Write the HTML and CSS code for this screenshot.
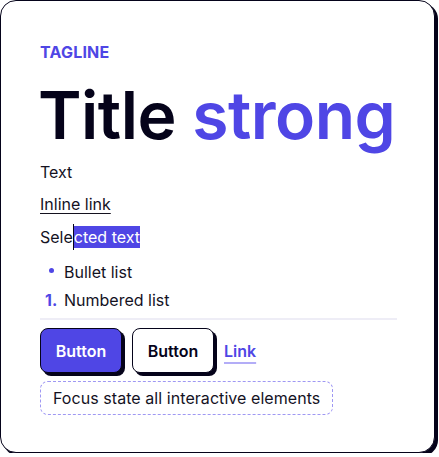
FILE: index.html
```html
<!DOCTYPE html>
<html lang="en">
<head>
<meta charset="utf-8">
<title>Style card</title>
<link rel="stylesheet" href="styles.css">
</head>
<body>
<div class="card">
  <p class="tagline">Tagline</p>
  <h1 class="title">Title <span class="accent">strong</span></h1>
  <p class="text">Text</p>
  <p class="text"><a class="inline-link" href="#">Inline link</a></p>
  <p class="text">Sele<span class="caret"></span><span class="selected">cted text</span></p>
  <ul class="bullets">
    <li>Bullet list</li>
  </ul>
  <ol class="numbers">
    <li><span class="num">1.</span>Numbered list</li>
  </ol>
  <hr class="divider">
  <div class="actions">
    <button class="btn btn-primary">Button</button>
    <button class="btn btn-secondary">Button</button>
    <a class="link" href="#">Link</a>
  </div>
  <div class="focus">Focus state all interactive elements</div>
</div>
</body>
</html>
```
FILE: styles.css
```css
* { box-sizing: border-box; }
html, body { margin: 0; padding: 0; background: #ffffff; }
body {
  font-family: Inter, "Noto Sans", sans-serif;
  color: #14121f;
  font-size: 16px;
  line-height: 24px;
}
.card {
  width: 435px;
  height: 453px;
  border: 1px solid #05031a;
  border-radius: 16px;
  box-shadow: 3px 3px 0 #05031a;
  padding: 39px 39px 0 39px;
  background: #fff;
}
.tagline {
  margin: 0;
  color: #4f46e5;
  font-weight: 700;
  text-transform: uppercase;
  font-size: 16px;
  line-height: 24px;
  letter-spacing: 0.2px;
}
.title {
  margin: 18px 0 12px -2px;
  font-size: 66px;
  line-height: 66px;
  font-weight: 600;
  color: #05031a;
  letter-spacing: -0.5px;
  white-space: nowrap;
}
.accent { color: #4f46e5; }
.text { margin: 0 0 8px 0; }
.inline-link {
  color: #14121f;
  text-decoration: underline;
  text-underline-offset: 3px;
  text-decoration-thickness: 1px;
}
.caret {
  display: inline-block;
  width: 1px;
  height: 26px;
  background: #05031a;
  vertical-align: -7px;
  margin-right: 0;
}
.selected {
  background: #4f46e5;
  color: #fff;
  padding: 1px 0;
}
.bullets, .numbers {
  list-style: none;
  margin: 0;
  padding: 0 0 0 24px;
}
.bullets { margin-top: 10px; }
.numbers { margin-top: 4px; }
.bullets li { position: relative; }
.bullets li::before {
  content: "";
  position: absolute;
  left: -15px;
  top: 8px;
  width: 5px;
  height: 5px;
  border-radius: 50%;
  background: #4f46e5;
}
.num {
  display: inline-block;
  width: 0;
  margin-left: -19px;
  margin-right: 19px;
  color: #4f46e5;
  font-weight: 700;
}
.divider {
  border: none;
  height: 2px;
  background: #eeedf6;
  margin: 6px 0 8px 0;
  width: 357px;
}
.actions {
  display: flex;
  align-items: center;
  gap: 10px;
}
.btn {
  font-family: Inter, "Noto Sans", sans-serif;
  font-size: 16px;
  font-weight: 600;
  width: 82px;
  height: 45px;
  border: 1.5px solid #05031a;
  border-radius: 8px;
  box-shadow: 3px 3px 0 #05031a;
  padding: 0;
}
.btn-primary { background: #4f46e5; color: #fff; }
.btn-secondary { background: #fff; color: #05031a; }
.link {
  color: #4f46e5;
  font-weight: 600;
  text-decoration: underline;
  text-decoration-color: #b3adf7;
  text-decoration-thickness: 1.5px;
  text-underline-offset: 5px;
}
.focus {
  margin-top: 8px;
  display: inline-block;
  border: 1.5px dashed #9f98f3;
  border-radius: 8px;
  padding: 4px 12px;
  line-height: 24px;
  letter-spacing: 0.06px;
}
```
